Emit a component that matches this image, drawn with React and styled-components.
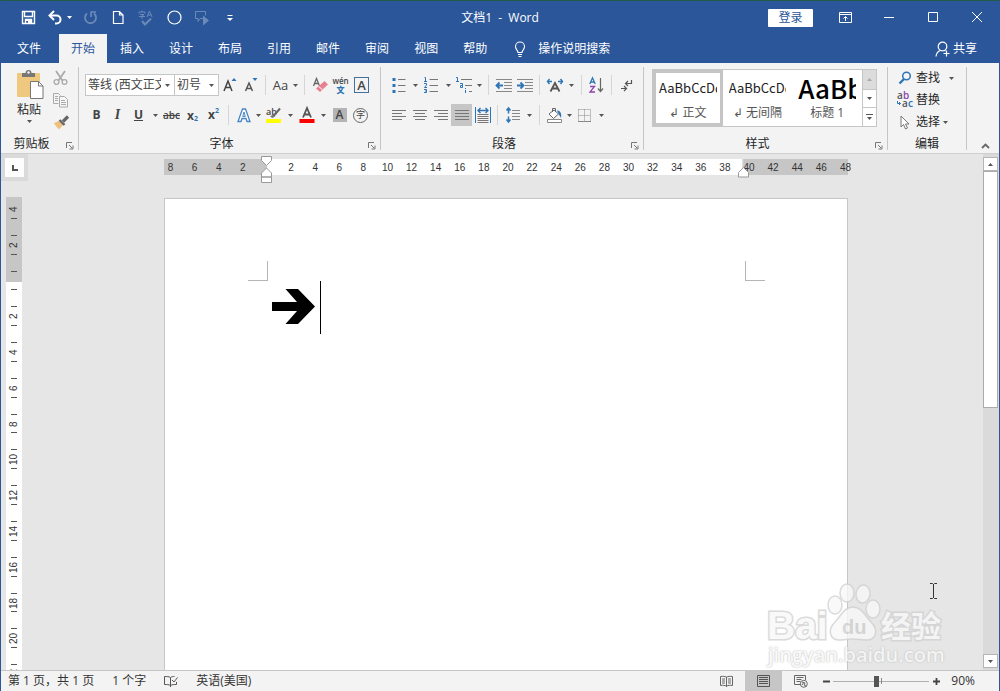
import styled, { createGlobalStyle, css } from 'styled-components';

const GlobalStyle = createGlobalStyle`
  * {
    box-sizing: border-box;
  }

  body {
    margin: 0;
    font-family: 'Open Sans', 'Noto Sans CJK SC', sans-serif;
    font-size: 12px;
    line-height: 16px;
    color: #262626;
  }

  button, select, input {
    margin: 0;
    padding: 0;
    border: 0;
    background: none;
    color: inherit;
    font: inherit;
  }

  svg {
    display: block;
    flex: none;
    overflow: visible;
  }
`;

const AppWindow = styled.div`
  display: flex;
  flex-direction: column;
  height: 100vh;
  overflow: hidden;
  border: solid #2b579a;
  border-width: 0 1px;
  border-top: 1px solid #1e5c46;
  background: #e6e6e6;
`;

/* title bar */

const TitleBar = styled.header`
  display: grid;
  grid-template-columns: 1fr auto 1fr;
  align-items: center;
  height: 33px;
  background: #2b579a;
  color: #fff;
`;

const QuickBar = styled.div`
  display: flex;
  align-items: center;
  padding-left: 13px;
`;

const QuickButton = styled.button`
  display: flex;
  align-items: center;
  justify-content: center;
  width: 28px;
  height: 28px;
  opacity: ${({ $dim }) => ($dim ? 0.3 : 1)};
`;

const UndoButton = styled(QuickButton)`
  width: 34px;
  gap: 4px;
  padding-left: 2px;
`;

const Title = styled.h1`
  margin: 0;
  font-size: 12px;
  font-weight: 400;
  white-space: pre;
`;

const WindowControls = styled.div`
  display: flex;
  align-items: center;
  justify-content: flex-end;
`;

const LoginButton = styled.button`
  width: 45px;
  height: 18px;
  margin-right: 10px;
  border-radius: 1px;
  background: #fff;
  color: #2b579a;
  line-height: 16px;
`;

const ControlButton = styled.button`
  display: flex;
  align-items: center;
  justify-content: center;
  width: 44px;
  height: 32px;
  padding-bottom: 1px;
`;

/* tabs */

const TabBar = styled.nav`
  display: flex;
  align-items: stretch;
  gap: 1px;
  height: 29px;
  background: #2b579a;
  color: #fff;
`;

const Tab = styled.button`
  padding: 0 12px;
  background: ${({ $active }) => ($active ? '#f3f3f3' : 'transparent')};
  color: ${({ $active }) => ($active ? '#2b579a' : '#fff')};
  line-height: 26px;
`;

const FileTab = styled(Tab)`
  padding: 0 17px 0 16px;
`;

const TellMe = styled.button`
  display: flex;
  align-items: center;
  gap: 12px;
  margin-left: 14px;
`;

const ShareButton = styled.button`
  display: flex;
  align-items: center;
  gap: 3px;
  margin-left: auto;
  padding-right: 22px;
`;

/* ribbon */

const Ribbon = styled.section`
  display: flex;
  height: 91px;
  padding: 4px 0 3px;
  border-bottom: 1px solid #cfcfcf;
  background: #f3f3f3;
`;

const GroupBox = styled.div`
  display: flex;
  flex: ${({ $grow }) => ($grow ? '1' : 'none')};
  flex-direction: column;
  min-width: 0;
  border-right: 1px solid #c6c6c6;
`;

const GroupBody = styled.div`
  display: flex;
  flex: 1;
  flex-direction: ${({ $rows }) => ($rows ? 'column' : 'row')};
  gap: ${({ $rows }) => ($rows ? '8px' : '0')};
  padding: ${({ $pad }) => $pad};
`;

const GroupFooter = styled.div`
  display: flex;
  align-items: center;
  height: 12px;
`;

const GroupLabel = styled.span`
  flex: 1;
  text-align: center;
`;

const Launcher = styled.button`
  display: flex;
  align-items: center;
  justify-content: center;
  width: 16px;
  height: 16px;
  padding-top: 4px;
`;

const ToolRow = styled.div`
  display: flex;
  align-items: center;
  height: 22px;
`;

const ToolButton = styled.button`
  display: flex;
  align-items: center;
  justify-content: center;
  width: 21px;
  height: 22px;
  background: ${({ $on }) => ($on ? '#c6c6c6' : 'transparent')};
  color: #444;
`;

const letter = css`
  color: #444;
  font-size: ${({ $size }) => $size || 12}px;
  line-height: 16px;
`;

const BoldMark = styled.b`
  ${letter}
`;

const ItalicMark = styled.i`
  ${letter}
  font-family: 'Liberation Serif', serif;
  font-weight: 700;
`;

const UnderlineMark = styled.u`
  ${letter}
  font-weight: 700;
`;

const StrikeMark = styled.s`
  ${letter}
  font-weight: 600;
`;

const PlainMark = styled.span`
  ${letter}
`;

const ArrowButton = styled.button`
  display: flex;
  align-items: center;
  justify-content: center;
  width: ${({ $narrow }) => ($narrow ? 9 : 12)}px;
  height: 22px;
`;

const Divider = styled.span`
  width: 1px;
  height: 20px;
  margin: 0 4px;
  background: #d5d5d5;
`;

const PasteButton = styled.button`
  display: flex;
  flex-direction: column;
  align-items: center;
  width: 42px;
  gap: 2px;
  padding-top: 2px;
`;

const SmallTools = styled.div`
  display: flex;
  flex-direction: column;
`;

const Combo = styled.label`
  display: grid;
  align-items: center;
  width: ${({ $width }) => $width}px;
  height: 22px;
  margin-left: -1px;
  border: 1px solid #c6c6c6;
  background: #fff;

  > * {
    grid-area: 1 / 1;
  }

  > svg {
    justify-self: end;
    margin-right: 4px;
    pointer-events: none;
  }
`;

const ComboSelect = styled.select`
  appearance: none;
  width: 100%;
  height: 20px;
  padding: 0 13px 0 2px;
  overflow: hidden;
  color: #444;
  outline: none;
`;

const Gallery = styled.div`
  display: flex;
  height: 58px;
  border: 1px solid #c6c6c6;
  background: #fff;
`;

const GalleryItems = styled.div`
  display: grid;
  flex: 1;
  grid-template-columns: repeat(3, 1fr);
  min-width: 0;
`;

const StyleCard = styled.button`
  display: flex;
  flex-direction: column;
  align-items: center;
  justify-content: space-between;
  min-width: 0;
  padding: 0 3px 2px;
  border: 3px solid ${({ $active }) => ($active ? '#c5c5c5' : '#fff')};
`;

const StyleSample = styled.span`
  width: 100%;
  overflow: hidden;
  color: ${({ $large }) => ($large ? '#000' : '#222')};
  font-family: 'Noto Sans CJK SC', sans-serif;
  font-size: ${({ $large }) => ($large ? 26 : 13)}px;
  font-weight: ${({ $large }) => ($large ? 500 : 400)};
  line-height: 30px;
  text-align: left;
  white-space: nowrap;
`;

const StyleName = styled.span`
  color: #555;
  white-space: nowrap;
`;

const GalleryScroll = styled.div`
  display: grid;
  grid-template-rows: repeat(3, 1fr);
  width: 14px;
  border-left: 1px solid #c6c6c6;
`;

const GalleryButton = styled.button`
  display: flex;
  align-items: center;
  justify-content: center;
  background: ${({ $disabled }) => ($disabled ? '#dcdcdc' : '#fff')};

  & + & {
    border-top: 1px solid #c6c6c6;
  }
`;

const EditButton = styled.button`
  display: flex;
  align-items: center;
  height: 22px;
  gap: 3px;
`;

const EditIcon = styled.span`
  display: flex;
  justify-content: center;
  width: 16px;
`;

const EditRow = styled.div`
  display: flex;
  align-items: center;
  gap: 5px;
`;

const CollapseButton = styled.button`
  display: flex;
  align-items: flex-end;
  justify-content: center;
  width: 32px;
  padding: 0 0 1px 4px;
`;

/* workspace */

const Workspace = styled.main`
  position: relative;
  display: grid;
  flex: 1;
  grid-template-columns: 27px 1fr 16px;
  min-height: 0;
  overflow: hidden;
`;

const Side = styled.div`
  display: flex;
  flex-direction: column;
  min-height: 0;
`;

const TabStop = styled.button`
  display: flex;
  flex: none;
  align-items: center;
  justify-content: center;
  width: 27px;
  height: 27px;
  border: 4px solid #dadada;
  background: #fdfdfd;
`;

const VerticalRuler = styled.div`
  flex: 1;
  width: 16px;
  min-height: 0;
  margin: 16px 0 0 5px;
  overflow: hidden;
  background: linear-gradient(#c6c6c6 85px, #fff 85px);
  color: #333;
  font-family: 'Liberation Sans', sans-serif;
  font-size: 10px;
  line-height: 12px;
`;

const VerticalScale = styled.div`
  display: grid;
  grid-template-rows: repeat(14, 1fr);
  height: 501px;
  margin-top: -6px;
`;

const VerticalCell = styled.div`
  display: flex;
  flex-direction: column;
  align-items: center;
  justify-content: space-between;
  padding: 8px 0;

  &::before,
  &::after {
    width: 6px;
    height: 1px;
    background: #555;
    content: '';
  }

  &:first-child::before {
    background: none;
  }

  span {
    display: flex;
    align-items: center;
    height: 6px;
    writing-mode: vertical-rl;
    transform: rotate(180deg);
    justify-content: center;
  }
`;

const Canvas = styled.div`
  display: flex;
  flex-direction: column;
  align-items: center;
  min-width: 0;
  min-height: 0;
  padding-top: 5px;
`;

const HorizontalRuler = styled.div`
  position: relative;
  display: grid;
  flex: none;
  width: 684px;
  height: 16px;
  margin-bottom: 23px;
  background: linear-gradient(
    to right,
    #c6c6c6 103px,
    #fff 103px,
    #fff 578px,
    #e6e6e6 578px,
    #c6c6c6 580px
  );
`;

const HorizontalScale = styled.div`
  display: grid;
  grid-template-columns: repeat(29, 1fr);
  margin: 0 -10px 0 -5px;
  color: #333;
  font-family: 'Liberation Sans', sans-serif;
  font-size: 10px;
  line-height: 18px;
  text-align: center;
`;

const IndentMarkers = styled.svg`
  position: absolute;
  top: -3px;
  left: 97px;
`;

const RightMarker = styled.svg`
  position: absolute;
  top: 8px;
  right: 98px;
`;

const Page = styled.article`
  flex: 1;
  width: 684px;
  padding: 62px 82px 0 83px;
  border: solid #c6c6c6;
  border-width: 1px 1px 0;
  background: #fff;
`;

const CropMarks = styled.div`
  display: flex;
  justify-content: space-between;
`;

const CropMark = styled.span`
  width: 20px;
  height: 20px;
  border-bottom: 1px solid #b5b5b5;
  border-left: ${({ $right }) => ($right ? '1px solid #b5b5b5' : '0')};
  border-right: ${({ $right }) => ($right ? '0' : '1px solid #b5b5b5')};
`;

const Line = styled.div`
  display: flex;
  gap: 5px;
  height: 53px;
  padding-left: 24px;
`;

const ArrowShape = styled.svg`
  margin-top: 8px;
`;

const Caret = styled.span`
  width: 1px;
  height: 53px;
  background: #000;
`;

const ScrollBar = styled.div`
  display: flex;
  flex-direction: column;
  padding: 3px 1px 2px 0;
  background: #dadada;
`;

const ScrollButton = styled.button`
  display: flex;
  align-items: center;
  justify-content: center;
  height: 14px;
  border: 1px solid #b5b5b5;
  background: #fff;
`;

const ScrollTrack = styled.div`
  flex: 1;
`;

const ScrollThumb = styled.div`
  height: 49%;
  border: 1px solid #ababab;
  background: #fff;
`;

const IBeam = styled.svg`
  position: absolute;
  right: 62px;
  bottom: 71px;
`;

const Watermark = styled.div`
  position: absolute;
  right: 50px;
  bottom: 0;
  width: 182px;
  opacity: 0.8;
`;

const WatermarkUrl = styled.div`
  height: 28px;
  padding-left: 1px;
  color: #f8f8f8;
  font-size: 20px;
  font-weight: 600;
  line-height: 26px;
  text-shadow: 0 0 1px #bbb, 0 0 2px #bbb;
`;

/* status bar */

const StatusBar = styled.footer`
  display: flex;
  align-items: center;
  height: 21px;
  padding: 0 24px 0 7px;
  border-top: 1px solid #c6c6c6;
  background: #f3f3f3;
  color: #333;
`;

const StatusItem = styled.span`
  margin-right: 18px;
  white-space: nowrap;
`;

const ViewButtons = styled.div`
  display: flex;
  height: 20px;
  margin-left: auto;
`;

const ViewButton = styled.button`
  display: flex;
  align-items: center;
  justify-content: center;
  width: 37px;
  background: ${({ $on }) => ($on ? '#c6c6c6' : 'transparent')};
`;

const ZoomButton = styled.button`
  display: flex;
  align-items: center;
  justify-content: center;
  width: 14px;
  height: 20px;
`;

const ZoomSlider = styled.input`
  appearance: none;
  width: 96px;
  height: 20px;
  background: linear-gradient(#8a8a8a, #8a8a8a) 50% 50% / 1px 6px no-repeat,
    linear-gradient(#b0b0b0, #b0b0b0) 0 50% / 100% 1px no-repeat;

  &::-webkit-slider-thumb {
    appearance: none;
    width: 5px;
    height: 11px;
    background: #555;
  }
`;

const ZoomValue = styled.button`
  margin-left: 8px;
`;

/* icons */

const Arrow = ({ up, color = '#555' }) => (
  <svg width="5" height="3" viewBox="0 0 5 3" aria-hidden="true">
    <path d={up ? 'M0 3h5L2.5 0z' : 'M0 0h5L2.5 3z'} fill={color} />
  </svg>
);

const Glyph = ({ w = 18, h = 18, stroke = '#666', children }) => (
  <svg width={w} height={h} viewBox={`0 0 ${w} ${h}`} fill="none" stroke={stroke} aria-hidden="true">
    {children}
  </svg>
);

const SaveIcon = () => (
  <Glyph w={15} h={15} stroke="#fff">
    <path d="M1.5 1.5h12v12h-12z" strokeWidth="1.4" />
    <path d="M3.5 1.5v5h8v-5M4.5 13.5v-4h6v4" strokeWidth="1.4" />
    <path d="M5 9h5v5H7v-3H5z" fill="#fff" stroke="none" />
  </Glyph>
);

const UndoIcon = () => (
  <Glyph w={15} h={15} stroke="#fff">
    <path d="M2 5.5h6.500a4 4 0 0 1 0 8H7" strokeWidth="2" />
    <path d="M6 1L1.5 5.5L6 10" strokeWidth="2" />
  </Glyph>
);

const RedoIcon = () => (
  <Glyph w={15} h={15} stroke="#fff">
    <path d="M4 3.5a5.500 5.500 0 1 0 7 0" strokeWidth="1.8" />
    <path d="M7.500 2h5.500M8 1.500v5.500" strokeWidth="1.6" />
  </Glyph>
);

const NewIcon = () => (
  <Glyph w={12} h={15} stroke="#fff">
    <path d="M1.5 1.5h6l3.500 3.500v8.500h-9.500zM7.500 1.5v3.500h3.500" strokeWidth="1.2" />
  </Glyph>
);

const SpellIcon = () => (
  <Glyph w={16} h={16} stroke="#fff">
    <path d="M1 3.5V2h6v1.500M4 .5V2M2 4.500h4L4 6v3M1 6.500h6M9 7l2.500-6L14 7M10 5h3" />
    <path d="M4 11l3 3.500 6-6" strokeWidth="2" />
  </Glyph>
);

const CircleIcon = () => (
  <Glyph w={15} h={15} stroke="#fff">
    <circle cx="7.5" cy="7.5" r="6.5" strokeWidth="1.2" />
  </Glyph>
);

const BubbleIcon = () => (
  <Glyph w={16} h={16} stroke="#fff">
    <path d="M9 8.500H6l-2 3v-3H1.500v-7h10v4" />
    <path d="M9 5.500l6 5-6 5z" fill="#fff" stroke="none" />
  </Glyph>
);

const CustomizeIcon = () => (
  <Glyph w={6} h={8} stroke="#fff">
    <path d="M.5 1.500h5" />
    <path d="M0 4h6L3 7z" fill="#fff" stroke="none" />
  </Glyph>
);

const RibbonOptionsIcon = () => (
  <Glyph w={13} h={11} stroke="#fff">
    <path d="M.5.5h12v10H.5zM.5 2.500h12M6.500 9V5M4.500 6.500l2-2 2 2" />
  </Glyph>
);

const BulbIcon = () => (
  <Glyph w={12} h={16} stroke="#fff">
    <path
      d="M4 11.500c0-2-2.500-3-2.500-6a4.500 4.500 0 0 1 9 0c0 3-2.500 4-2.500 6zM4 13.500h4M4.500 15.500h3"
      strokeWidth="1.1"
    />
  </Glyph>
);

const ShareIcon = () => (
  <Glyph w={15} h={16} stroke="#fff">
    <circle cx="7.5" cy="5.5" r="4.3" strokeWidth="1.2" />
    <path d="M1 15.500c.3-3 2-5.300 4.500-6M9.500 9.500l1 .5M11.500 9.500v6M8.500 12.500h6" strokeWidth="1.2" />
  </Glyph>
);

const LauncherIcon = () => (
  <Glyph w={8} h={8} stroke="#777">
    <path d="M.5 6V.5H6M3 3l3 3M7 3.500V7H3.500" />
  </Glyph>
);

const PasteIcon = () => (
  <Glyph w={28} h={31}>
    <rect x="2" y="4" width="23" height="24" rx="1" fill="#eec87f" stroke="none" />
    <path d="M7 8V4h3.500a3 3 0 0 1 6 0H20v4z" fill="#777" stroke="none" />
    <circle cx="13.5" cy="3.5" r="1.2" fill="#f3f3f3" stroke="none" />
    <path d="M15.5 12.500h8l4.500 4.500v12.500H15.500z" fill="#fff" stroke="#777" />
    <path d="M23.500 12.500v4.500H28" stroke="#777" />
  </Glyph>
);

const CutIcon = () => (
  <Glyph w={15} h={16} stroke="#aaa">
    <path d="M3 1l6.500 9.500M12 1L5.500 10.500" strokeWidth="1.8" />
    <circle cx="3.5" cy="12" r="2.4" strokeWidth="1.3" />
    <circle cx="11.5" cy="12" r="2.4" strokeWidth="1.3" />
  </Glyph>
);

const CopyIcon = () => (
  <Glyph w={16} h={15} stroke="#aaa">
    <path d="M5.500 10.500h-5V.5h5l2 2M2 3.500h3M2 5.500h3M2 7.500h3" />
    <path d="M6.500 3.500h5l3 3v7.500h-8zM8 7.500h4M8 9.500h5M8 11.500h5" fill="#f6f6f6" />
  </Glyph>
);

const BrushIcon = () => (
  <Glyph w={16} h={15}>
    <path d="M1 8l5-2 4 4-4 4.500C4 12 2.500 11 1 8z" fill="#eec07a" stroke="none" />
    <path d="M6.500 5l5 5" stroke="#666" strokeWidth="2.4" />
    <path d="M10 6.500L15 1.500" stroke="#666" strokeWidth="3.2" />
  </Glyph>
);

const GrowIcon = ({ shrink }) => (
  <Glyph w={14} h={16} stroke={shrink ? '#555' : '#444'}>
    <path
      d={shrink ? 'M1.500 14L5 6l3.500 8M2.800 11.500h4.500' : 'M1 14L5 4l4 10M2.500 10.500h5'}
      strokeWidth="1.5"
    />
    <path d={shrink ? 'M8.500 1h5L11 4z' : 'M8.500 4h5L11 1z'} fill="#2e75b6" stroke="none" />
  </Glyph>
);

const EraserIcon = () => (
  <Glyph w={16} h={16}>
    <path d="M1.500 9L4.500 1.500l3 7.500M2.500 6.500h4" stroke="#666" strokeWidth="1.3" />
    <path d="M4 11.500l8.500-7.500 3.500 3.500-8 7.500z" fill="#e8808f" stroke="none" />
    <path d="M6.500 9.300l4 3.500" stroke="#fff" />
  </Glyph>
);

const PhoneticMark = styled.span`
  display: flex;
  flex-direction: column;
  align-items: center;
  color: #444;
  font-size: 8px;
  font-weight: 600;
  line-height: 8px;

  b {
    color: #2e75b6;
    font-size: 8px;
    line-height: 9px;
  }
`;

const BorderedLetter = styled.span`
  display: grid;
  place-items: center;
  width: 15px;
  height: 16px;
  border: 1px solid #41719c;
  color: #444;
  font-size: 13px;
  font-weight: 600;
  line-height: 14px;
`;

const ShadedLetter = styled.span`
  display: grid;
  place-items: center;
  width: 14px;
  height: 14px;
  background: #b5b5b5;
  color: #444;
  font-size: 12px;
  font-weight: 600;
  line-height: 14px;
`;

const CircledLetter = styled.span`
  display: grid;
  place-items: center;
  width: 15px;
  height: 15px;
  border: 1px solid #666;
  border-radius: 50%;
  color: #444;
  font-size: 9px;
  line-height: 12px;
`;

const ScriptMark = styled.span`
  display: flex;
  align-items: ${({ $sup }) => ($sup ? 'flex-start' : 'flex-end')};
  height: 16px;
  font-size: 12px;
  font-weight: 700;
  line-height: 15px;

  small {
    color: #2e75b6;
    font-size: 7px;
    line-height: 8px;
  }
`;

const EffectIcon = () => (
  <Glyph w={14} h={15} stroke="#4a86c5">
    <path d="M1 13.500L5.500 1h3L13 13.500h-3L9 10.500H5L4 13.500z" fill="#fff" strokeWidth="1.3" />
    <path d="M5.700 8.500L7 4l1.300 4.500z" />
  </Glyph>
);

const HighlightIcon = () => (
  <Glyph w={17} h={16}>
    <text x="1" y="8" fill="#444" stroke="none" fontSize="9" fontWeight="600">ab</text>
    <path d="M15 1.500L8.500 9" stroke="#666" strokeWidth="2" />
    <path d="M5 9.500l3-2 2 2-2.500 1.500z" fill="#777" stroke="none" />
    <path d="M1 12h15v4H1z" fill="#ff0" stroke="none" />
  </Glyph>
);

const FontColorIcon = () => (
  <Glyph w={16} h={16} stroke="#555">
    <path d="M4 10.500L8 1l4 9.500M5.500 7.500h5" strokeWidth="1.8" />
    <path d="M.5 12h15v4H.5z" fill="#f00" stroke="none" />
  </Glyph>
);

const BulletsIcon = () => (
  <Glyph w={14} h={16}>
    <path d="M6 2.500h7.500M6 8.500h7.500M6 14.500h7.500" stroke="#777" />
    <path d="M.5 1h3v3h-3zM.5 7h3v3h-3zM.5 13h3v3h-3z" fill="#2e75b6" stroke="none" />
  </Glyph>
);

const NumbersIcon = () => (
  <Glyph w={15} h={16}>
    <path d="M5.500 2.500H14M5.500 8.500H14M5.500 14.500H14" stroke="#777" />
    <path d="M.5.5h1v4M0 4.500h3M0 6.500h2.500v1.500L.5 10.500H3M0 12.500h2.500v3H0M1 14h1.500" stroke="#2e75b6" />
  </Glyph>
);

const MultiIcon = () => (
  <Glyph w={17} h={16}>
    <path d="M5 2.500h11M9 8.500h7M13 14.500h3" stroke="#777" />
    <path d="M0 .5h1.500v4M0 4.500h3M4 6.500h2.500v4H4.500v-2h2M9.500 11v1M9.500 13v3" stroke="#2e75b6" />
  </Glyph>
);

const IndentIcon = ({ right }) => (
  <Glyph w={16} h={14}>
    <path d="M0 1.500h16M8 4.500h8M8 7.500h8M8 10.500h8M0 13.500h16" stroke="#888" />
    <path
      d={right ? 'M0 7.500h6M3.500 4.500l3 3-3 3' : 'M7 7.500H1M3.500 4.500l-3 3 3 3'}
      stroke="#2e75b6"
      strokeWidth="1.8"
    />
  </Glyph>
);

const AsianLayoutIcon = () => (
  <Glyph w={16} h={14}>
    <path d="M3.500 13.500L8 5l4.500 8.500M5 10.500h6" stroke="#555" strokeWidth="1.8" />
    <path
      d="M0 3.500h5M2.500 1l-2 2.500 2 2.500M16 3.500h-5M13.500 1l2 2.500-2 2.500"
      stroke="#2e75b6"
      strokeWidth="1.4"
    />
  </Glyph>
);

const SortIcon = () => (
  <Glyph w={15} h={16}>
    <path d="M.8 7L3.500.8 6.200 7M1.800 5h3.500" stroke="#2e75b6" strokeWidth="1.3" />
    <path d="M1 9.500h4.500L1 15h5" stroke="#8e44ad" strokeWidth="1.3" />
    <path d="M11.500 1v13M9 11.500l2.500 3 2.500-3" stroke="#666" strokeWidth="1.2" />
  </Glyph>
);

const MarksIcon = () => (
  <Glyph w={12} h={13}>
    <path
      d="M10.500 1v3.500H5M7 2L4.500 4.500 7 7M0 9.500h5M3 7l2.500 2.500L3 12"
      stroke="#555"
      strokeWidth="1.2"
    />
  </Glyph>
);

const AlignIcon = ({ d }) => (
  <Glyph w={14} h={12}>
    <path d={d} stroke="#777" />
  </Glyph>
);

const DistributeIcon = () => (
  <Glyph w={16} h={16}>
    <path d="M.5 0v16M15.500 0v16" stroke="#2e75b6" />
    <path d="M3 3.500h10M5.500 1L3 3.500 5.500 6M10.500 1L13 3.500 10.500 6" stroke="#2e75b6" strokeWidth="1.4" />
    <path d="M2.500 7.500h11M2.500 9.500h11M2.500 11.500h11M2.500 13.500h11M2.500 15.500h11" stroke="#777" />
  </Glyph>
);

const SpacingIcon = () => (
  <Glyph w={14} h={16}>
    <path d="M6 3.500h8M6 6.500h8M6 9.500h8M6 12.500h8" stroke="#888" />
    <path
      d="M2.500 1v5.500M.5 3.500l2-2.500 2 2.500M2.500 9.500V15M.5 12.500l2 2.500 2-2.500"
      stroke="#2e75b6"
      strokeWidth="1.5"
    />
  </Glyph>
);

const BucketIcon = () => (
  <Glyph w={17} h={16}>
    <path d="M3 7l5-4 4.500 4-5 4.500z" fill="#fff" stroke="#666" />
    <path d="M6.500 5V1.500h3V5" stroke="#666" />
    <path d="M11 3.500c3 0 5 2.500 4 7.500-1-2-2-3-2.500-4.500z" fill="#2e75b6" stroke="none" />
    <path d="M1.500 12.500h14v3h-14z" fill="#fff" stroke="#888" />
  </Glyph>
);

const BordersIcon = () => (
  <Glyph w={13} h={13} stroke="#888">
    <path d="M.5.5h12M.5.5v12M12.500.5v12M6.500.5v12M.5 6.500h12" strokeDasharray="1 1" />
    <path d="M0 12.500h13" />
  </Glyph>
);

const FindIcon = () => (
  <Glyph w={14} h={14} stroke="#2e75b6">
    <circle cx="8.5" cy="5" r="3.8" strokeWidth="1.5" />
    <path d="M6 8l-4.500 4.500" strokeWidth="2.4" />
  </Glyph>
);

const ReplaceIcon = () => (
  <Glyph w={16} h={16}>
    <g fontSize="10" fontWeight="600" stroke="none">
      <text x="0" y="7" fill="#555">a</text>
      <text x="6" y="7" fill="#8e44ad">b</text>
      <text x="5" y="15" fill="#555">a</text>
      <text x="11" y="15" fill="#2e75b6">c</text>
    </g>
    <path d="M.5 9v2.500h3M2 10l1.500 1.500L2 13" stroke="#2e75b6" />
  </Glyph>
);

const SelectIcon = () => (
  <Glyph w={10} h={15} stroke="#777">
    <path d="M1 1v11l2.500-2.500 2 4.500 2-1-2-4H9z" fill="#fff" />
  </Glyph>
);

const ProofIcon = () => (
  <Glyph w={14} h={12} stroke="#555">
    <path d="M6.500 10.500C5 9.500 3 9.500.5 9.500v-8c2.500 0 4.500 0 6 1zM6.500 2.500c1.500-1 2.500-1 4-1M6.500 10.500c1.500-1 3.500-1 6-1V7M8 5l2 2 3.500-4.500M6.500 10.500v1.500" />
  </Glyph>
);

const ReadIcon = () => (
  <Glyph w={13} h={12} stroke="#666">
    <path d="M.5 1.500c2.500-.5 4.500 0 6 .5 1.500-.5 3.500-1 6-.5v9c-2.500-.5-4.500 0-6 .5-1.500-.5-3.500-1-6-.5zM6.500 2v10M2 4h3M2 6h3M2 8h3M8 4h3M8 6h3M8 8h3" />
  </Glyph>
);

const PrintIcon = () => (
  <Glyph w={13} h={12} stroke="#555">
    <path d="M.5.5h12v11H.5zM2 2.500h9M2 4.500h9M2 6.500h9M2 8.500h9" />
  </Glyph>
);

const WebIcon = () => (
  <Glyph w={14} h={13} stroke="#666">
    <path d="M6 9.500H.5v-9h11V5M2.500 2.500h7M2.500 4.500h5M2.500 6.500h4" />
    <circle cx="9.8" cy="8.8" r="3.5" fill="#f3f3f3" />
    <path d="M8 7l3 1-1 2 2 1M8 10l2-3" />
  </Glyph>
);

const alignments = {
  left: 'M0 1.500h14M0 4.500h10M0 7.500h14M0 10.500h10',
  center: 'M0 1.500h14M2 4.500h10M0 7.500h14M2 10.500h10',
  right: 'M0 1.500h14M4 4.500h10M0 7.500h14M4 10.500h10',
  justify: 'M0 1.500h14M0 4.500h14M0 7.500h14M0 10.500h14',
};

const Tool = ({ label, on, children }) => (
  <ToolButton aria-label={label} $on={on}>
    {children}
  </ToolButton>
);

const Drop = ({ label = '更多', narrow }) => (
  <ArrowButton aria-label={label} $narrow={narrow}>
    <Arrow />
  </ArrowButton>
);

const Group = ({ label, pad, rows, grow, launcher = true, children }) => (
  <GroupBox $grow={grow}>
    <GroupBody $pad={pad} $rows={rows}>
      {children}
    </GroupBody>
    <GroupFooter>
      <GroupLabel>{label}</GroupLabel>
      {launcher && (
        <Launcher aria-label={`${label}设置`}>
          <LauncherIcon />
        </Launcher>
      )}
    </GroupFooter>
  </GroupBox>
);

const tabs = ['开始', '插入', '设计', '布局', '引用', '邮件', '审阅', '视图', '帮助'];

const Header = () => (
  <>
    <TitleBar>
      <QuickBar>
        <QuickButton aria-label="保存"><SaveIcon /></QuickButton>
        <UndoButton aria-label="撤消"><UndoIcon /><Arrow color="#fff" /></UndoButton>
        <QuickButton aria-label="重复" $dim><RedoIcon /></QuickButton>
        <QuickButton aria-label="新建"><NewIcon /></QuickButton>
        <QuickButton aria-label="拼写检查" $dim><SpellIcon /></QuickButton>
        <QuickButton aria-label="椭圆"><CircleIcon /></QuickButton>
        <QuickButton aria-label="朗读" $dim><BubbleIcon /></QuickButton>
        <QuickButton aria-label="自定义"><CustomizeIcon /></QuickButton>
      </QuickBar>
      <Title>{'文档1  -  Word'}</Title>
      <WindowControls>
        <LoginButton>登录</LoginButton>
        <ControlButton aria-label="功能区显示选项"><RibbonOptionsIcon /></ControlButton>
        <ControlButton aria-label="最小化">
          <Glyph w={10} h={10} stroke="#fff"><path d="M0 5.500h10" /></Glyph>
        </ControlButton>
        <ControlButton aria-label="最大化">
          <Glyph w={10} h={10} stroke="#fff"><path d="M.5.5h9v9h-9z" /></Glyph>
        </ControlButton>
        <ControlButton aria-label="关闭">
          <Glyph w={10} h={10} stroke="#fff"><path d="M0 0l10 10M10 0L0 10" /></Glyph>
        </ControlButton>
      </WindowControls>
    </TitleBar>
    <TabBar>
      <FileTab>文件</FileTab>
      {tabs.map((name, i) => (
        <Tab key={name} $active={i === 0}>{name}</Tab>
      ))}
      <TellMe><BulbIcon />操作说明搜索</TellMe>
      <ShareButton><ShareIcon />共享</ShareButton>
    </TabBar>
  </>
);

const FontGroup = () => (
  <Group label="字体" pad="7px 8px 0 7px" rows>
    <ToolRow>
      <Combo $width={90}>
        <ComboSelect aria-label="字体" defaultValue="body">
          <option value="body">等线 (西文正文)</option>
        </ComboSelect>
        <Arrow />
      </Combo>
      <Combo $width={45}>
        <ComboSelect aria-label="字号" defaultValue="42">
          <option value="42">初号</option>
        </ComboSelect>
        <Arrow />
      </Combo>
      <Tool label="增大字号"><GrowIcon /></Tool>
      <Tool label="减小字号"><GrowIcon shrink /></Tool>
      <Divider />
      <Tool label="更改大小写"><PlainMark $size={13}>Aa</PlainMark></Tool>
      <Drop narrow />
      <Divider />
      <Tool label="清除格式"><EraserIcon /></Tool>
      <Tool label="拼音指南"><PhoneticMark>wén<b>文</b></PhoneticMark></Tool>
      <Tool label="字符边框"><BorderedLetter>A</BorderedLetter></Tool>
    </ToolRow>
    <ToolRow>
      <Tool label="加粗"><BoldMark>B</BoldMark></Tool>
      <Tool label="倾斜"><ItalicMark $size={14}>I</ItalicMark></Tool>
      <Tool label="下划线"><UnderlineMark>U</UnderlineMark></Tool>
      <Drop />
      <Tool label="删除线"><StrikeMark $size={10}>abc</StrikeMark></Tool>
      <Tool label="下标"><ScriptMark>x<small>2</small></ScriptMark></Tool>
      <Tool label="上标"><ScriptMark $sup>x<small>2</small></ScriptMark></Tool>
      <Divider />
      <Tool label="文本效果"><EffectIcon /></Tool>
      <Drop narrow />
      <Tool label="突出显示"><HighlightIcon /></Tool>
      <Drop />
      <Tool label="字体颜色"><FontColorIcon /></Tool>
      <Drop />
      <Tool label="字符底纹"><ShadedLetter>A</ShadedLetter></Tool>
      <Tool label="带圈字符"><CircledLetter>字</CircledLetter></Tool>
    </ToolRow>
  </Group>
);

const ParagraphGroup = () => (
  <Group label="段落" pad="7px 6px 0 7px" rows>
    <ToolRow>
      <Tool label="项目符号"><BulletsIcon /></Tool>
      <Drop />
      <Tool label="编号"><NumbersIcon /></Tool>
      <Drop />
      <Tool label="多级列表"><MultiIcon /></Tool>
      <Drop narrow />
      <Divider />
      <Tool label="减少缩进量"><IndentIcon /></Tool>
      <Tool label="增加缩进量"><IndentIcon right /></Tool>
      <Divider />
      <Tool label="中文版式"><AsianLayoutIcon /></Tool>
      <Drop />
      <Divider />
      <Tool label="排序"><SortIcon /></Tool>
      <Divider />
      <Tool label="显示编辑标记"><MarksIcon /></Tool>
    </ToolRow>
    <ToolRow>
      <Tool label="左对齐"><AlignIcon d={alignments.left} /></Tool>
      <Tool label="居中"><AlignIcon d={alignments.center} /></Tool>
      <Tool label="右对齐"><AlignIcon d={alignments.right} /></Tool>
      <Tool label="两端对齐" on><AlignIcon d={alignments.justify} /></Tool>
      <Tool label="分散对齐"><DistributeIcon /></Tool>
      <Divider />
      <Tool label="行距"><SpacingIcon /></Tool>
      <Drop />
      <Divider />
      <Tool label="底纹"><BucketIcon /></Tool>
      <Drop narrow />
      <Tool label="边框"><BordersIcon /></Tool>
      <Drop />
    </ToolRow>
  </Group>
);

const RibbonBar = () => (
  <Ribbon>
    <Group label="剪贴板" pad="0 7px 0 7px">
      <PasteButton>
        <PasteIcon />
        粘贴
        <Arrow />
      </PasteButton>
      <SmallTools>
        <Tool label="剪切"><CutIcon /></Tool>
        <Tool label="复制"><CopyIcon /></Tool>
        <Tool label="格式刷"><BrushIcon /></Tool>
      </SmallTools>
    </Group>
    <FontGroup />
    <ParagraphGroup />
    <Group label="样式" pad="2px 10px 0 8px" rows grow>
      <Gallery>
        <GalleryItems>
          <StyleCard $active>
            <StyleSample>AaBbCcDd</StyleSample>
            <StyleName>↲ 正文</StyleName>
          </StyleCard>
          <StyleCard>
            <StyleSample>AaBbCcDd</StyleSample>
            <StyleName>↲ 无间隔</StyleName>
          </StyleCard>
          <StyleCard>
            <StyleSample $large>AaBb</StyleSample>
            <StyleName>标题 1</StyleName>
          </StyleCard>
        </GalleryItems>
        <GalleryScroll>
          <GalleryButton aria-label="上一行" $disabled><Arrow up color="#aaa" /></GalleryButton>
          <GalleryButton aria-label="下一行"><Arrow /></GalleryButton>
          <GalleryButton aria-label="其他">
            <Glyph w={7} h={7} stroke="#555">
              <path d="M0 .5h7" />
              <path d="M1 3h5L3.500 6z" fill="#555" stroke="none" />
            </Glyph>
          </GalleryButton>
        </GalleryScroll>
      </Gallery>
    </Group>
    <Group label="编辑" pad="0 9px 0 9px" launcher={false}>
      <SmallTools>
        <EditRow>
          <EditButton><EditIcon><FindIcon /></EditIcon>查找</EditButton>
          <Drop />
        </EditRow>
        <EditButton><EditIcon><ReplaceIcon /></EditIcon>替换</EditButton>
        <EditButton><EditIcon><SelectIcon /></EditIcon>选择<Arrow /></EditButton>
      </SmallTools>
    </Group>
    <CollapseButton aria-label="折叠功能区">
      <Glyph w={9} h={6} stroke="#666"><path d="M1 5l3.500-3.500L8 5" strokeWidth="1.8" /></Glyph>
    </CollapseButton>
  </Ribbon>
);

const horizontal = Array.from({ length: 29 }, (_, i) => Math.abs(i * 2 - 8));
const vertical = Array.from({ length: 14 }, (_, i) => Math.abs(i * 2 - 4));

const BaiduMark = () => (
  <svg width="182" height="58" viewBox="0 0 182 58" fill="#f8f8f8" stroke="#d2d2d2" strokeWidth="1.5">
    <ellipse cx="68" cy="21" rx="7" ry="9" />
    <ellipse cx="80" cy="9" rx="7" ry="9" />
    <ellipse cx="96" cy="10" rx="7" ry="9" transform="rotate(8 96 10)" />
    <ellipse cx="106" cy="25" rx="7" ry="9" />
    <path d="M86 23c9 0 12 9 18 15 8 8 5 18-4 18-6 0-8-1-14-1s-8 1-14 1c-9 0-12-10-4-18 6-6 9-15 18-15z" />
    <g fontFamily="'Liberation Sans', sans-serif" fontWeight="700" paintOrder="stroke">
      <text x="0" y="55" fontSize="39" strokeWidth="3">Bai</text>
      <text x="75" y="50" fontSize="20" fill="#cfcfcf" stroke="none">du</text>
      <text x="114" y="53" fontSize="30" fontFamily="'Noto Sans CJK SC', sans-serif" strokeWidth="3">经验</text>
    </g>
  </svg>
);

const DocumentArea = () => (
  <Workspace>
    <Side>
      <TabStop aria-label="制表符">
        <Glyph w={6} h={6} stroke="#555"><path d="M1 0v5h5" strokeWidth="2" /></Glyph>
      </TabStop>
      <VerticalRuler>
        <VerticalScale>
          {vertical.map((n, i) => (
            <VerticalCell key={i}><span>{n || ''}</span></VerticalCell>
          ))}
        </VerticalScale>
      </VerticalRuler>
    </Side>
    <Canvas>
      <HorizontalRuler>
        <HorizontalScale>
          {horizontal.map((n, i) => (
            <span key={i}>{n || ''}</span>
          ))}
        </HorizontalScale>
        <IndentMarkers width="12" height="28" viewBox="0 0 12 28" fill="#fff" stroke="#999">
          <path d="M.5.5h10v4l-5 5-5-5zM.5 21v-4l5-5 5 5v4zM.5 21h10v5.500H.5z" />
        </IndentMarkers>
        <RightMarker width="12" height="11" viewBox="0 0 12 11" fill="#fff" stroke="#999">
          <path d="M.5 10V5.500l5-5 5 5V10z" />
        </RightMarker>
      </HorizontalRuler>
      <Page>
        <CropMarks>
          <CropMark />
          <CropMark $right />
        </CropMarks>
        <Line>
          <ArrowShape width="43" height="35" viewBox="0 0 43 35" role="img" aria-label="➔">
            <path d="M0 13h25L13.500 0H26L43 17.500 26 35H13.500L25 22H0z" />
          </ArrowShape>
          <Caret />
        </Line>
      </Page>
    </Canvas>
    <ScrollBar>
      <ScrollButton aria-label="向上滚动"><Arrow up /></ScrollButton>
      <ScrollTrack><ScrollThumb /></ScrollTrack>
      <ScrollButton aria-label="向下滚动"><Arrow /></ScrollButton>
    </ScrollBar>
    <IBeam width="7" height="16" viewBox="0 0 7 16" fill="none" stroke="#333">
      <path d="M0 .5h2.500l1 1 1-1H7M3.500 1v14M0 15.500h2.500l1-1 1 1H7" />
    </IBeam>
    <Watermark>
      <BaiduMark />
      <WatermarkUrl>jingyan.baidu.com</WatermarkUrl>
    </Watermark>
  </Workspace>
);

const Status = () => (
  <StatusBar>
    <StatusItem>第 1 页，共 1 页</StatusItem>
    <StatusItem>1 个字</StatusItem>
    <StatusItem><ProofIcon /></StatusItem>
    <StatusItem>英语(美国)</StatusItem>
    <ViewButtons>
      <ViewButton aria-label="阅读视图"><ReadIcon /></ViewButton>
      <ViewButton aria-label="页面视图" $on><PrintIcon /></ViewButton>
      <ViewButton aria-label="Web 版式"><WebIcon /></ViewButton>
    </ViewButtons>
    <ZoomButton aria-label="缩小">
      <Glyph w={7} h={7} stroke="#444"><path d="M0 3.500h7" strokeWidth="2" /></Glyph>
    </ZoomButton>
    <ZoomSlider type="range" min="10" max="190" defaultValue="90" aria-label="显示比例" />
    <ZoomButton aria-label="放大">
      <Glyph w={7} h={7} stroke="#444"><path d="M0 3.500h7M3.500 0v7" strokeWidth="1.8" /></Glyph>
    </ZoomButton>
    <ZoomValue>90%</ZoomValue>
  </StatusBar>
);

const App = () => (
  <AppWindow>
    <GlobalStyle />
    <Header />
    <RibbonBar />
    <DocumentArea />
    <Status />
  </AppWindow>
);

export default App;
